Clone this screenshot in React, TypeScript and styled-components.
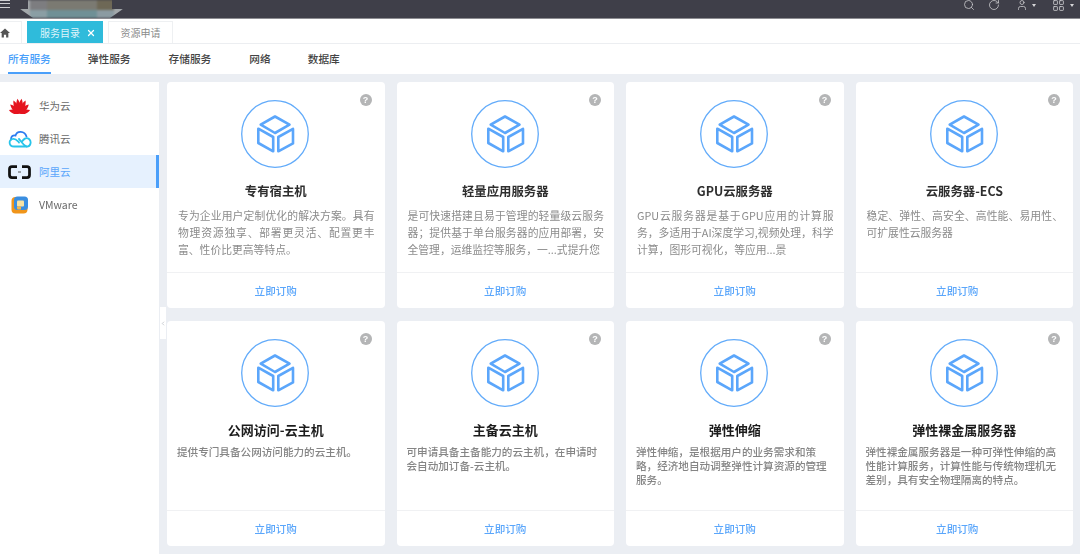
import styled, { createGlobalStyle } from "styled-components";
import { ChevronLeft, LayoutGrid, RotateCw, Search, User, X } from "lucide-react";

const GlobalStyle = createGlobalStyle`
  * {
    box-sizing: border-box;
  }

  html, body {
    margin: 0;
    padding: 0;
    background: #ebeef3;
    font-family: "Noto Sans CJK SC", "Noto Sans", sans-serif;
    overflow: hidden;
  }
`;

const Page = styled.div`
  position: relative;
  width: 1080px;
  height: 554px;
  display: flex;
  flex-direction: column;
  overflow: hidden;
  filter: blur(0.45px);
`;

const TopBar = styled.header`
  height: 19px;
  flex: none;
  display: flex;
  align-items: center;
  justify-content: space-between;
  background: #3f3f49;
  border-bottom: 1px solid #8d8d92;
`;

const Hamburger = styled.div`
  width: 10px;
  height: 8px;
  margin-top: -10px;
  border-top: 1px solid #cfcfd2;
  border-bottom: 1px solid #cfcfd2;
  position: relative;

  &::after {
    content: "";
    position: absolute;
    left: 0;
    right: 0;
    top: 2px;
    height: 1px;
    background: #cfcfd2;
  }
`;

const LogoSmudge = styled.div`
  position: absolute;
  left: 20px;
  top: 0;
  width: 103px;
  height: 18px;
  display: flex;
  justify-content: center;
  background: #a3a8ab;
  clip-path: polygon(8px 0, 92px 0, 92px 9px, 103px 9px, 90px 18px, 13px 18px, 0 9px, 8px 9px);
  filter: blur(0.8px);
`;

const SmudgeBlock = styled.div<{ $top: string; $bottom: string; $width: number }>`
  height: 100%;
  width: ${(p) => p.$width}px;
  background: linear-gradient(to bottom, ${(p) => p.$top} 0 10px, ${(p) => p.$bottom} 10px);
`;

const TopActions = styled.div`
  display: flex;
  align-items: center;
  margin-top: -8px;
  padding-right: 6px;
  color: #c9c9cc;
`;

const TopAction = styled.div<{ $gap: number; $inner?: number }>`
  display: flex;
  align-items: center;
  gap: ${(p) => p.$inner ?? 4}px;
  margin-right: ${(p) => p.$gap}px;
`;

const Caret = styled.span`
  width: 0;
  height: 0;
  border-left: 2.5px solid transparent;
  border-right: 2.5px solid transparent;
  border-top: 3px solid #d6d6d8;
`;

const TabBar = styled.div`
  height: 25px;
  flex: none;
  display: flex;
  align-items: flex-end;
  background: #fff;
  border-bottom: 1px solid #eceef1;
`;

const HomeTab = styled.div`
  width: 22px;
  height: 22px;
  flex: none;
  margin-right: 5px;
  display: flex;
  align-items: center;
  border: 1px solid #eef0f2;
  border-left: none;
  border-bottom: none;
`;

const Tab = styled.div<{ $active?: boolean }>`
  height: 22px;
  display: flex;
  align-items: center;
  justify-content: ${(p) => (p.$active ? "flex-start" : "center")};
  gap: 6px;
  width: ${(p) => (p.$active ? 76 : 65)}px;
  margin-right: 5px;
  padding-left: ${(p) => (p.$active ? 12 : 0)}px;
  font-size: 10px;
  color: ${(p) => (p.$active ? "#dff4fa" : "#8a8a8a")};
  background: ${(p) => (p.$active ? "#2fbbdb" : "#fff")};
  border: 1px solid ${(p) => (p.$active ? "#2fbbdb" : "#eef0f2")};
  border-bottom: none;
`;

const NavBar = styled.nav`
  height: 30px;
  flex: none;
  display: flex;
  background: #fff;
`;

const NavItem = styled.div<{ $active?: boolean; $left: number }>`
  height: 30px;
  margin-left: ${(p) => p.$left}px;
  display: flex;
  align-items: center;
  font-size: 10.7px;
  font-weight: 500;
  color: ${(p) => (p.$active ? "#4a9ffa" : "#444")};
  border-bottom: 2px solid ${(p) => (p.$active ? "#4a9ffa" : "transparent")};
`;

const Body = styled.div`
  flex: 1;
  min-height: 0;
  display: flex;
  gap: 8px;
  padding-top: 8px;
`;

const Sidebar = styled.aside`
  width: 159px;
  flex: none;
  padding-top: 7px;
  background: #fff;
`;

const VendorRow = styled.div<{ $active?: boolean }>`
  height: 33px;
  display: flex;
  align-items: center;
  gap: 7px;
  padding-left: 7px;
  font-size: 10.5px;
  color: ${(p) => (p.$active ? "#5aa6fb" : "#6a6a6a")};
  background: ${(p) => (p.$active ? "#e6f1fe" : "transparent")};
  border-right: 3px solid ${(p) => (p.$active ? "#4a9ffa" : "transparent")};
`;

const VendorLogo = styled.div`
  width: 25px;
  height: 20px;
  flex: none;
  display: flex;
  align-items: center;
  justify-content: center;
`;

const Handle = styled.div`
  position: absolute;
  left: 160px;
  top: 307px;
  width: 6px;
  height: 32px;
  display: flex;
  align-items: center;
  justify-content: center;
  color: #9aa0a8;
  background: #fff;
`;

const CardGrid = styled.main`
  flex: 1;
  min-width: 0;
  display: grid;
  grid-template-columns: repeat(4, 1fr);
  grid-template-rows: 226px 225px;
  gap: 13px 12px;
  padding-right: 7px;
`;

const Card = styled.article`
  position: relative;
  display: flex;
  flex-direction: column;
  align-items: center;
  background: #fff;
  border-radius: 4px;
`;

const HelpBadge = styled.span`
  position: absolute;
  top: 12px;
  right: 13px;
  width: 12px;
  height: 12px;
  border-radius: 50%;
  display: flex;
  align-items: center;
  justify-content: center;
  background: #b4b5b6;
  color: #fff;
  font-family: "Liberation Sans", sans-serif;
  font-size: 9px;
  font-weight: 700;
`;

const CubeBadge = styled.svg`
  width: 68px;
  height: 68px;
  flex: none;
  margin: 18px 1px 0 0;
`;

const CardTitle = styled.h3<{ $strong: boolean }>`
  margin: 13px 0 0;
  height: 20px;
  line-height: 20px;
  font-size: ${(p) => (p.$strong ? 13 : 12.4)}px;
  font-weight: 700;
  color: ${(p) => (p.$strong ? "#1c1c1c" : "#2e2e2e")};
`;

const CardText = styled.div<{ $dense: boolean }>`
  flex: 1;
  align-self: stretch;
  margin-top: ${(p) => (p.$dense ? 5 : 6)}px;
  padding: 0 10px 0 ${(p) => (p.$dense ? 10 : 11)}px;
  font-size: ${(p) => (p.$dense ? 10.6 : 10.8)}px;
  font-weight: ${(p) => (p.$dense ? 500 : 400)};
  line-height: ${(p) => (p.$dense ? 14 : 17)}px;
  color: ${(p) => (p.$dense ? "#858585" : "#8b8b8b")};
`;

const TextLine = styled.div<{ $fill: boolean }>`
  white-space: nowrap;
  text-align: ${(p) => (p.$fill ? "justify" : "left")};
  text-align-last: ${(p) => (p.$fill ? "justify" : "left")};
`;

const CardFooter = styled.div<{ $shift: number }>`
  align-self: stretch;
  height: 36px;
  flex: none;
  display: flex;
  align-items: center;
  justify-content: center;
  padding-right: ${(p) => p.$shift}px;
  border-top: 1px solid #f0f1f3;
  font-size: 10.6px;
  font-weight: 500;
  color: #5aa6fb;
`;

const CubeIcon = () => (
  <CubeBadge viewBox="1 1 68 68" fill="none">
    <circle cx="35" cy="35" r="33.3" stroke="#62abfa" strokeWidth="1.3" />
    <g stroke="#5ba6fb" strokeWidth="2.6" strokeLinejoin="round">
      <path d="M35 17.5 49.5 25.7 35 34 20.7 25.7Z" />
      <path d="M18.3 29.7 33.2 38V52.3L18.3 44Z" />
      <path d="M53 29.9 38.3 38V52.3L53 44.4Z" />
    </g>
  </CubeBadge>
);

// eight petals fanning out from the bottom centre, shorter towards the sides
const huaweiPetals = [
  { angle: -72, length: 0.74 },
  { angle: -46, length: 0.86 },
  { angle: -25, length: 0.96 },
  { angle: -8, length: 1 },
  { angle: 8, length: 1 },
  { angle: 25, length: 0.96 },
  { angle: 46, length: 0.86 },
  { angle: 72, length: 0.74 },
];

const HuaweiLogo = () => (
  <svg width="23" height="16" viewBox="0 0 46 32">
    <g fill="#e5141f">
      {huaweiPetals.map(({ angle, length }) => (
        <path
          key={angle}
          d="M0 0C-5 -8 -5 -20 0 -30 5 -20 5 -8 0 0Z"
          transform={`translate(23 31) rotate(${angle}) scale(1.15 ${length})`}
        />
      ))}
    </g>
  </svg>
);

const TencentLogo = () => (
  <svg width="24" height="18" viewBox="0 0 48 36" fill="none" strokeWidth="3.6" strokeLinecap="round">
    <path d="M6 19C6 12 10 10 15 11 18 1 33 1 37 13" stroke="#2b7bf0" />
    <path d="M22 18C27 23 30 31 37 33 45 34 48 23 42 18 36 13 31 19 27 24" stroke="#27c4ea" />
    <path d="M37 33H12C2 33 0 21 9 18 15 16 18 21 22 25" stroke="#27c4ea" />
  </svg>
);

const AliyunLogo = () => (
  <svg width="23" height="14" viewBox="0 0 46 28" fill="none">
    <path d="M18 3H8C5 3 3 5 3 8V20C3 23 5 25 8 25H18" stroke="#111" strokeWidth="5.5" />
    <path d="M28 3H38C41 3 43 5 43 8V20C43 23 41 25 38 25H28" stroke="#111" strokeWidth="5.5" />
    <path d="M20 14H26" stroke="#555" strokeWidth="2" />
  </svg>
);

const VmwareLogo = () => (
  <svg width="18" height="18" viewBox="0 0 36 36">
    <rect x="1" y="2" width="32" height="33" rx="8" fill="#f0951a" />
    <rect x="6" y="1" width="28" height="27" rx="7" fill="#3a8ee0" />
    <rect x="12" y="9" width="14" height="12" rx="2" fill="#f8e3a4" />
    <path d="M12 21H20V27H15C13 27 12 26 12 24Z" fill="#f6b64a" />
  </svg>
);

const vendors = [
  { name: "华为云", logo: <HuaweiLogo /> },
  { name: "腾讯云", logo: <TencentLogo /> },
  { name: "阿里云", logo: <AliyunLogo />, active: true },
  { name: "VMware", logo: <VmwareLogo /> },
];

const navItems = [
  { label: "所有服务", left: 8, active: true },
  { label: "弹性服务", left: 37 },
  { label: "存储服务", left: 38 },
  { label: "网络", left: 38 },
  { label: "数据库", left: 37 },
];

const services = [
  {
    title: "专有宿主机",
    lines: ["专为企业用户定制优化的解决方案。具有", "物理资源独享、部署更灵活、配置更丰", "富、性价比更高等特点。"],
  },
  {
    title: "轻量应用服务器",
    lines: ["是可快速搭建且易于管理的轻量级云服务", "器；提供基于单台服务器的应用部署，安", "全管理，运维监控等服务，一...式提升您"],
  },
  {
    title: "GPU云服务器",
    lines: ["GPU云服务器是基于GPU应用的计算服", "务，多适用于AI深度学习,视频处理，科学", "计算，图形可视化，等应用...景"],
  },
  {
    title: "云服务器-ECS",
    lines: ["稳定、弹性、高安全、高性能、易用性、", "可扩展性云服务器"],
  },
  {
    title: "公网访问-云主机",
    lines: ["提供专门具备公网访问能力的云主机。"],
  },
  {
    title: "主备云主机",
    lines: ["可申请具备主备能力的云主机，在申请时", "会自动加订备-云主机。"],
  },
  {
    title: "弹性伸缩",
    lines: ["弹性伸缩，是根据用户的业务需求和策", "略，经济地自动调整弹性计算资源的管理", "服务。"],
  },
  {
    title: "弹性裸金属服务器",
    lines: ["弹性裸金属服务器是一种可弹性伸缩的高", "性能计算服务，计算性能与传统物理机无", "差别，具有安全物理隔离的特点。"],
  },
];

export default function App() {
  return (
    <Page>
      <GlobalStyle />
      <TopBar>
        <Hamburger />
        <TopActions>
          <TopAction $gap={13}>
            <Search size={12} strokeWidth={1.6} />
          </TopAction>
          <TopAction $gap={16}>
            <RotateCw size={12} strokeWidth={1.6} />
          </TopAction>
          <TopAction $gap={16}>
            <User size={12} strokeWidth={1.6} />
            <Caret />
          </TopAction>
          <TopAction $gap={0} $inner={5}>
            <LayoutGrid size={13} strokeWidth={1.6} />
            <Caret />
          </TopAction>
        </TopActions>
      </TopBar>
      <LogoSmudge>
        <SmudgeBlock $top="#7d7d80" $bottom="#8a9ea4" $width={17} />
        <SmudgeBlock $top="#7b7a72" $bottom="#6f9096" $width={50} />
        <SmudgeBlock $top="#6e6856" $bottom="#8b9ba2" $width={17} />
      </LogoSmudge>
      <TabBar>
        <HomeTab>
          <svg width="10" height="10" viewBox="0 0 18 18" fill="#555">
            <path d="M9 1 0 9h3v8h4v-5h4v5h4V9h3z" />
          </svg>
        </HomeTab>
        <Tab $active>
          服务目录
          <X size={10} strokeWidth={3} color="#fff" />
        </Tab>
        <Tab>资源申请</Tab>
      </TabBar>
      <NavBar>
        {navItems.map((item) => (
          <NavItem key={item.label} $left={item.left} $active={item.active}>
            {item.label}
          </NavItem>
        ))}
      </NavBar>
      <Body>
        <Sidebar>
          {vendors.map((vendor) => (
            <VendorRow key={vendor.name} $active={vendor.active}>
              <VendorLogo>{vendor.logo}</VendorLogo>
              {vendor.name}
            </VendorRow>
          ))}
        </Sidebar>
        <CardGrid>
          {services.map((service, index) => (
            <Card key={service.title}>
              <HelpBadge>?</HelpBadge>
              <CubeIcon />
              <CardTitle $strong={index >= 4}>{service.title}</CardTitle>
              <CardText $dense={index >= 4}>
                {service.lines.map((line, lineIndex) => (
                  <TextLine key={line} $fill={index < 4 && lineIndex < service.lines.length - 1}>
                    {line}
                  </TextLine>
                ))}
              </CardText>
              <CardFooter $shift={index % 4 === 3 ? 14 : 0}>立即订购</CardFooter>
            </Card>
          ))}
        </CardGrid>
      </Body>
      <Handle>
        <ChevronLeft size={7} />
      </Handle>
    </Page>
  );
}
